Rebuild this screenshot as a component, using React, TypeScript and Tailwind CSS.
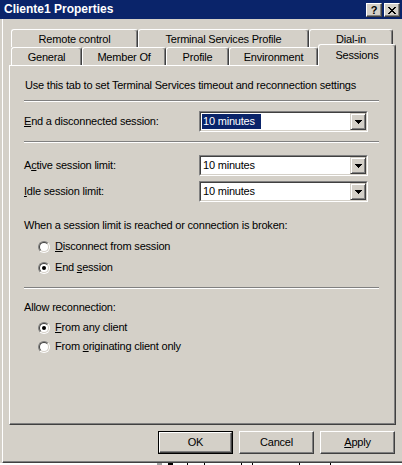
import React from 'react';

const FONT = "font-['Liberation_Sans',Arial,sans-serif]";

function Tab({ label, w, selected }: { label: string; w: string; selected?: boolean }) {
  if (selected) {
    return (
      <div
        className={`${w} h-[22px] -mb-px relative z-10 bg-[#d4d0c8] border-l border-t border-white rounded-t-[3px] border-r border-r-[#404040] shadow-[inset_-1px_0_0_#808080] flex items-center justify-center`}
      >
        {label}
      </div>
    );
  }
  return (
    <div
      className={`${w} h-[18px] bg-[#d4d0c8] border-l border-t border-white rounded-t-[3px] border-r border-r-[#404040] shadow-[inset_-1px_0_0_#808080] flex items-center justify-center pt-px`}
    >
      {label}
    </div>
  );
}

function Separator({ className = '' }: { className?: string }) {
  return (
    <div className={`w-[355px] ${className}`}>
      <div className="h-px bg-[#808080]" />
      <div className="h-px bg-white" />
    </div>
  );
}

function Combo({ value, highlighted }: { value: string; highlighted?: boolean }) {
  return (
    <div className="w-[169px] h-[21px] border border-t-[#808080] border-l-[#808080] border-r-white border-b-white">
      <div className="h-full border border-t-[#404040] border-l-[#404040] border-r-[#d4d0c8] border-b-[#d4d0c8] bg-white flex items-center">
        <div className="flex-1 flex items-center pl-px">
          <span
            className={
              highlighted
                ? 'bg-[#0a246a] text-white pl-px pr-[6px] leading-[15px] h-[15px]'
                : 'px-px leading-[15px] h-[15px]'
            }
          >
            {value}
          </span>
        </div>
        <div className="w-[16px] h-full bg-[#d4d0c8] border border-t-[#d4d0c8] border-l-[#d4d0c8] border-r-[#404040] border-b-[#404040] shadow-[inset_1px_1px_0_#ffffff,inset_-1px_-1px_0_#808080] flex items-center justify-center">
          <svg width="7" height="4" viewBox="0 0 7 4">
            <path d="M0 0h7v1H0zM1 1h5v1H1zM2 2h3v1H2zM3 3h1v1H3z" fill="#000" />
          </svg>
        </div>
      </div>
    </div>
  );
}

function Radio({ label, checked }: { label: React.ReactNode; checked?: boolean }) {
  return (
    <div className="h-[13px] flex items-center gap-[5px] ml-[14px]">
      <div className="w-[12px] h-[12px] rounded-full border border-t-[#808080] border-l-[#808080] border-r-white border-b-white flex">
        <div className="flex-1 rounded-full border border-t-[#404040] border-l-[#404040] border-r-[#d4d0c8] border-b-[#d4d0c8] bg-white flex items-center justify-center">
          {checked && <div className="w-[4px] h-[4px] rounded-full bg-black" />}
        </div>
      </div>
      <span className="leading-[13px]">{label}</span>
    </div>
  );
}

function Button({ children, isDefault }: { children: React.ReactNode; isDefault?: boolean }) {
  if (isDefault) {
    return (
      <div className="w-[75px] h-[23px] border border-black flex">
        <div className="flex-1 border border-t-white border-l-white border-r-[#404040] border-b-[#404040] shadow-[inset_-1px_-1px_0_#808080] flex items-center justify-center">
          {children}
        </div>
      </div>
    );
  }
  return (
    <div className="w-[75px] h-[23px] border border-t-white border-l-white border-r-[#404040] border-b-[#404040] shadow-[inset_-1px_-1px_0_#808080] flex items-center justify-center">
      {children}
    </div>
  );
}

export default function App() {
  return (
    <div className={`w-[402px] h-[465px] bg-white overflow-hidden text-[11px] tracking-[-0.2px] text-black ${FONT}`}>
      <div className="h-[463px] bg-[#d4d0c8] flex flex-col">
        {/* Title bar */}
        <div className="h-[19px] bg-[#0a246a] flex items-start justify-between">
          <span className="text-white font-bold text-[12px] tracking-normal leading-[19px] pl-[4px]">Cliente1 Properties</span>
          <div className="flex gap-[2px] pt-[3px] pr-[2px]">
            <div className="w-[16px] h-[14px] bg-[#d4d0c8] border border-t-white border-l-white border-r-[#404040] border-b-[#404040] shadow-[inset_-1px_-1px_0_#808080] flex items-center justify-center font-bold text-[11px] leading-none">
              ?
            </div>
            <div className="w-[16px] h-[14px] bg-[#d4d0c8] border border-t-white border-l-white border-r-[#404040] border-b-[#404040] shadow-[inset_-1px_-1px_0_#808080] flex items-center justify-center">
              <svg width="8" height="7" viewBox="0 0 8 7">
                <path
                  d="M0 0h2v1H0zM6 0h2v1H6zM1 1h2v1H1zM5 1h2v1H5zM2 2h4v1H2zM3 3h2v1H3zM2 4h4v1H2zM1 5h2v1H1zM5 5h2v1H5zM0 6h2v1H0zM6 6h2v1H6z"
                  fill="#000"
                />
              </svg>
            </div>
          </div>
        </div>

        {/* Body */}
        <div className="flex-1 ml-[2px] border-l border-white border-b border-b-[#404040] shadow-[inset_0_-1px_0_#808080] flex flex-col">
          {/* Tabs */}
          <div className="mt-[10px] ml-[8px] flex">
            <Tab label="Remote control" w="w-[127px]" />
            <Tab label="Terminal Services Profile" w="w-[171px]" />
            <Tab label="Dial-in" w="w-[84px]" />
          </div>
          <div className="ml-[8px] flex items-end h-[18px] relative z-10">
            <Tab label="General" w="w-[71px]" />
            <Tab label="Member Of" w="w-[84px]" />
            <Tab label="Profile" w="w-[63px]" />
            <Tab label="Environment" w="w-[89px]" />
            <Tab label="Sessions" w="w-[78px]" selected />
          </div>

          {/* Panel */}
          <div className="ml-[6px] w-[387px] h-[360px] border-l border-t border-white border-r border-b border-r-[#404040] border-b-[#404040] shadow-[inset_-1px_-1px_0_#808080] pl-[14px] flex flex-col">
            <div className="mt-[13px] h-[13px] leading-[13px] pl-px">
              Use this tab to set Terminal Services timeout and reconnection settings
            </div>
            <Separator className="mt-[8px]" />

            <div className="mt-[9px] flex items-center">
              <span className="w-[175px]">
                <u>E</u>nd a disconnected session:
              </span>
              <Combo value="10 minutes" highlighted />
            </div>

            <Separator className="mt-[9px]" />

            <div className="mt-[12px] flex items-center">
              <span className="w-[175px]">
                A<u>c</u>tive session limit:
              </span>
              <Combo value="10 minutes" />
            </div>
            <div className="mt-[5px] flex items-center">
              <span className="w-[175px]">
                <u>I</u>dle session limit:
              </span>
              <Combo value="10 minutes" />
            </div>

            <div className="mt-[17px] h-[13px] leading-[13px]">
              When a session limit is reached or connection is broken:
            </div>
            <div className="mt-[8px]">
              <Radio
                label={
                  <>
                    <u>D</u>isconnect from session
                  </>
                }
              />
            </div>
            <div className="mt-[8px]">
              <Radio
                checked
                label={
                  <>
                    End <u>s</u>ession
                  </>
                }
              />
            </div>

            <Separator className="mt-[13px]" />

            <div className="mt-[12px] h-[13px] leading-[13px]">Allow reconnection:</div>
            <div className="mt-[7px]">
              <Radio
                checked
                label={
                  <>
                    <u>F</u>rom any client
                  </>
                }
              />
            </div>
            <div className="mt-[6px]">
              <Radio
                label={
                  <>
                    From <u>o</u>riginating client only
                  </>
                }
              />
            </div>
          </div>

          {/* Buttons */}
          <div className="mt-[6px] flex justify-end gap-[6px] pr-[7px]">
            <Button isDefault>OK</Button>
            <Button>Cancel</Button>
            <Button>
              <u>A</u>pply
            </Button>
          </div>
        </div>
      </div>

      {/* Edge of the window behind */}
      <div className="h-[2px] flex items-start ml-[157px] gap-[6px]">
        <div className="w-[5px] h-[2px] bg-[#a0a0a0]" />
        <div className="w-[5px] h-[2px] bg-black" />
        <div className="w-px h-[2px] bg-black ml-[8px]" />
        <div className="w-px h-[2px] bg-black ml-[10px]" />
        <div className="w-px h-[2px] bg-black ml-[30px]" />
        <div className="w-px h-[2px] bg-black ml-[4px]" />
        <div className="w-px h-[2px] bg-black ml-[40px]" />
        <div className="w-px h-[2px] bg-black ml-[24px]" />
      </div>
    </div>
  );
}
